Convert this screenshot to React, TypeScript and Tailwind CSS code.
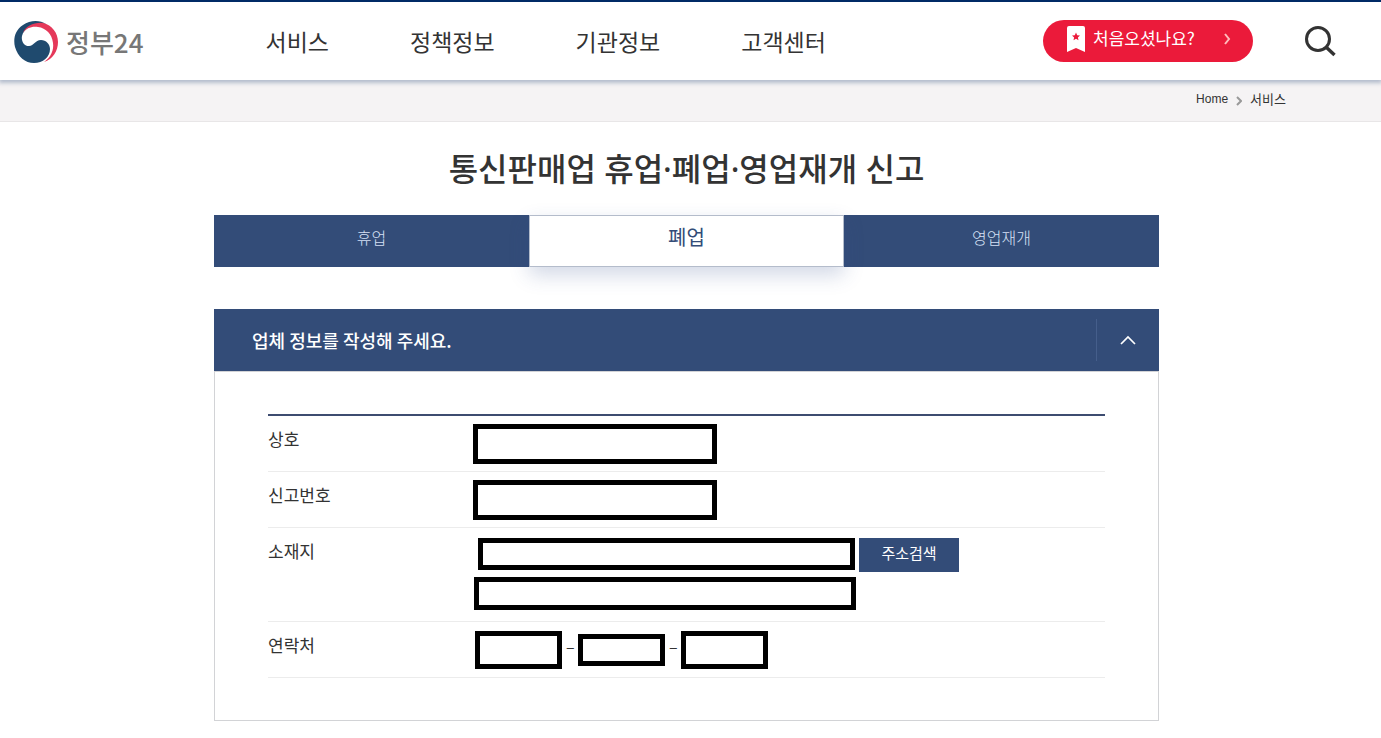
import { useState } from "react";
import type { ReactNode } from "react";

const menus = ["서비스", "정책정보", "기관정보", "고객센터"];
const tabs = ["휴업", "폐업", "영업재개"];

const inputBase = "border-[5px] border-black bg-white px-2 text-sm outline-none";

function GovLogo() {
  return (
    <svg width="44" height="42" viewBox="0 0 44 42" aria-hidden="true">
      <path
        d="M32 3 C26 -1 16 -1 9 4 C1 9 -1 18 1 26 C4 36 11 42 20 42 C29 42 36 36 36 28 C36 23 32 19 27 19 C21 19 20 25 15 25 C10 25 7 20 8 15 C10 7 20 2 32 3 Z"
        fill="#1f4a6e"
      />
      <path
        d="M9 12 C11 5 21 1 29 2 C38 4 44 12 44 21 C44 30 39 38 30 41 C37 36 40 29 39 22 C38 13 32 7 24 6 C18 5 12 7 9 12 Z"
        fill="#e5395a"
      />
    </svg>
  );
}

function Row({ label, htmlFor, children }: { label: string; htmlFor: string; children: ReactNode }) {
  return (
    <div className="flex border-b border-[#ececec]">
      <label htmlFor={htmlFor} className="w-[205px] shrink-0 pt-[11px] text-[17px] leading-6">
        {label}
      </label>
      {children}
    </div>
  );
}

export default function App() {
  const [tab, setTab] = useState("폐업");
  const [open, setOpen] = useState(true);

  return (
    <div className="min-h-screen bg-white font-['Noto_Sans_CJK_KR',sans-serif] text-[#333]">
      {/* Header */}
      <header className="relative z-10 flex h-20 items-center border-t-2 border-[#002a66] bg-white pr-11 pl-3.5 shadow-[0_2px_4px_1px_rgba(80,105,145,0.4)]">
        <a href="#" className="flex items-center gap-2 pt-0.5">
          <GovLogo />
          <span className="text-[26px] leading-8 font-medium text-[#777]">정부24</span>
        </a>
        <nav className="ml-[122px] flex flex-1 gap-[81px]">
          {menus.map((m) => (
            <a key={m} href="#" className="text-[23px] leading-8">
              {m}
            </a>
          ))}
        </nav>
        <a
          href="#"
          className="flex h-[42px] w-[210px] items-center rounded-full bg-[#eb1a3a] pr-5 pb-1 pl-6 text-white"
        >
          <svg width="18" height="26" viewBox="0 0 18 26" aria-hidden="true">
            <path d="M2 0H16Q18 0 18 2V26L9 22L0 26V2Q0 0 2 0Z" fill="#fff" />
            <path d="M9 6.5L10.2 9.2L13 9.5L10.9 11.4L11.5 14.3L9 12.8L6.5 14.3L7.1 11.4L5 9.5L7.8 9.2Z" fill="#eb1a3a" />
          </svg>
          <span className="ml-2 flex-1 pb-0.5 text-[17px] leading-6">처음오셨나요?</span>
          <svg width="10" height="12" viewBox="0 0 10 12" fill="none" aria-hidden="true">
            <path d="M2 1L6 6L2 11" stroke="#fbb" strokeWidth="2" />
          </svg>
        </a>
        <button type="button" aria-label="검색" className="ml-[50px]">
          <svg width="34" height="34" viewBox="0 0 34 34" fill="none" stroke="#333">
            <circle cx="15" cy="15" r="11.5" strokeWidth="3" />
            <path d="M23 23L31.5 31" strokeWidth="3.5" />
          </svg>
        </button>
      </header>

      {/* Breadcrumb */}
      <div className="flex h-[42px] items-center justify-end gap-2 border-b border-[#e8e6e7] bg-[#f5f3f4] pr-[95px] text-[13px]">
        <a href="#" className="pb-1 font-['Liberation_Sans',sans-serif] text-xs">
          Home
        </a>
        <svg width="6" height="10" viewBox="0 0 6 10" fill="none" aria-hidden="true">
          <path d="M1 1L5 5L1 9" stroke="#999" strokeWidth="2" />
        </svg>
        <a href="#" className="pb-1">
          서비스
        </a>
      </div>

      <main className="pr-2">
        <div className="mx-auto max-w-[945px]">
          <h1 className="pt-[23px] pb-[22px] text-center font-['Noto_Sans','Noto_Sans_CJK_KR',sans-serif] text-[32px] leading-12 font-medium">
            통신판매업 휴업·폐업·영업재개 신고
          </h1>

          {/* Tabs */}
          <div role="tablist" className="flex h-[52px]">
            {tabs.map((t) => (
              <button
                key={t}
                type="button"
                role="tab"
                aria-selected={tab === t}
                onClick={() => setTab(t)}
                className={
                  tab === t
                    ? "relative w-1/3 border border-[#b4bccb] bg-white pb-2 text-xl text-[#334c78] shadow-[0_8px_20px_rgba(51,76,140,0.22)]"
                    : "w-1/3 bg-[#334c78] pb-2 text-base font-light text-[#d5e0f5]"
                }
              >
                {t}
              </button>
            ))}
          </div>

          {/* Company information */}
          <section className="mt-[42px]">
            <div className="flex h-[62px] items-center bg-[#334c78] pl-[38px] text-white">
              <h2 className="flex-1 text-lg font-medium">업체 정보를 작성해 주세요.</h2>
              <button
                type="button"
                aria-label="접기"
                aria-expanded={open}
                onClick={() => setOpen(!open)}
                className="flex h-[42px] w-[63px] items-center justify-center border-l border-[#455e8b]"
              >
                <svg width="16" height="10" viewBox="0 0 16 10" fill="none" aria-hidden="true">
                  <path d="M1 9L8 2L15 9" stroke="#fff" strokeWidth="1.7" />
                </svg>
              </button>
            </div>
            {open && (
              <form className="border border-[#d2d3d6] px-[53px] py-[42px]">
                <div className="border-t-2 border-[#3d4c70]">
                  <Row label="상호" htmlFor="company">
                    <div className="pt-2 pb-[7px]">
                      <input id="company" type="text" className={`${inputBase} block h-10 w-[244px]`} />
                    </div>
                  </Row>
                  <Row label="신고번호" htmlFor="regno">
                    <div className="pt-2 pb-[7px]">
                      <input id="regno" type="text" className={`${inputBase} block h-10 w-[244px]`} />
                    </div>
                  </Row>
                  <Row label="소재지" htmlFor="addr">
                    <div className="pt-2.5 pb-[11px] pl-px">
                      <div className="flex gap-1 pl-1">
                        <input id="addr" type="text" className={`${inputBase} h-8 w-[377px]`} />
                        <button type="button" className="h-[34px] w-[100px] bg-[#334c78] pb-1 text-[15px] text-white">
                          주소검색
                        </button>
                      </div>
                      <input
                        type="text"
                        aria-label="상세주소"
                        className={`${inputBase} mt-[5px] block h-[33px] w-[382px]`}
                      />
                    </div>
                  </Row>
                  <Row label="연락처" htmlFor="tel1">
                    <div className="flex h-[55px] items-center gap-1 pl-0.5">
                      <input id="tel1" type="tel" className={`${inputBase} h-[38px] w-[87px]`} />
                      <span className="w-2 pb-2 text-center">–</span>
                      <input type="tel" aria-label="가운데 번호" className={`${inputBase} h-8 w-[87px]`} />
                      <span className="w-2 pb-2 text-center">–</span>
                      <input type="tel" aria-label="끝 번호" className={`${inputBase} h-[38px] w-[87px]`} />
                    </div>
                  </Row>
                </div>
              </form>
            )}
          </section>
        </div>
      </main>
    </div>
  );
}
